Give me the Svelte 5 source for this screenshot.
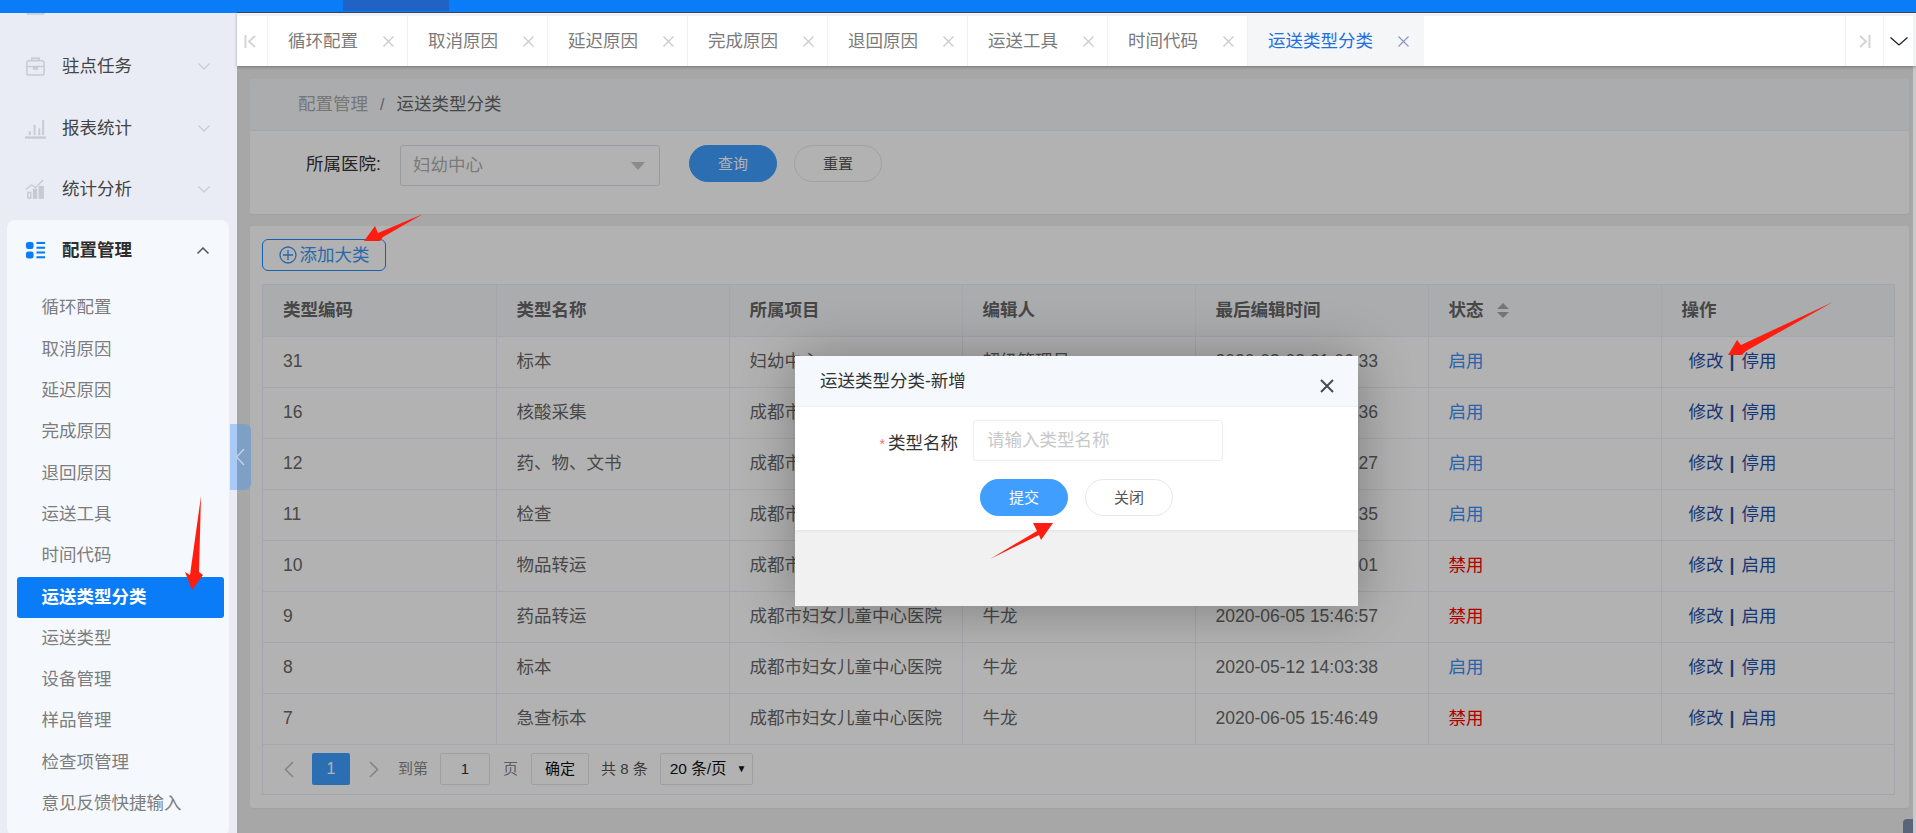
<script>
  const groups = [
    { name: '意见反馈', icon: 'top' },
    { name: '驻点任务', icon: 'case' },
    { name: '报表统计', icon: 'bars' },
    { name: '统计分析', icon: 'trend' }
  ];
  const subs = ['循环配置','取消原因','延迟原因','完成原因','退回原因','运送工具','时间代码','运送类型分类','运送类型','设备管理','样品管理','检查项管理','意见反馈快捷输入'];
  const tabs = ['循环配置','取消原因','延迟原因','完成原因','退回原因','运送工具','时间代码','运送类型分类'];
  const heads = ['类型编码','类型名称','所属项目','编辑人','最后编辑时间','状态','操作'];
  const H = '成都市妇女儿童中心医院';
  const rows = [
    ['31','标本','妇幼中心','超级管理员','2020-08-08 21:06:33',true],
    ['16','核酸采集',H,'牛龙','2020-06-05 15:47:36',true],
    ['12','药、物、文书',H,'牛龙','2020-06-05 15:47:27',true],
    ['11','检查',H,'牛龙','2020-06-05 15:47:35',true],
    ['10','物品转运',H,'牛龙','2020-06-05 15:47:01',false],
    ['9','药品转运',H,'牛龙','2020-06-05 15:46:57',false],
    ['8','标本',H,'牛龙','2020-05-12 14:03:38',true],
    ['7','急查标本',H,'牛龙','2020-06-05 15:46:49',false]
  ];
</script>

<div class="page">
  <header class="topbar"><span class="topactive"></span></header>
  <div class="below">
    <aside class="side">
      <div class="scroll">
        {#each groups as g}
          <div class="group">
            <svg class="gicon" viewBox="0 0 22 22" fill="none" stroke="#c6cad4" stroke-width="1.6">
              {#if g.icon === 'case' || g.icon === 'top'}
                <rect x="2" y="5" width="18" height="15" rx="2"/><path d="M7 5V2.5h8V5M2 11h18"/><path d="M9 11v2.5h4V11" fill="#c6cad4"/>
              {:else if g.icon === 'bars'}
                <path d="M0 20.5h22" stroke-width="2.4"/><path d="M5 18v-4M10 18V7M15 18v-7M19 18V2" stroke-width="2"/>
              {:else}
                <path d="M1 11l6-5 4 3 8-8" stroke-width="1.3"/><rect x="3" y="14" width="3" height="6"/><rect x="9" y="11" width="3" height="9" fill="#c6cad4"/><rect x="15" y="8" width="4" height="12" fill="#c6cad4"/>
              {/if}
            </svg>
            <span class="gname">{g.name}</span>
            <svg class="chev" viewBox="0 0 12 7" fill="none" stroke="#c9cdd6" stroke-width="1.3"><path d="M.5.5L6 6l5.5-5.5"/></svg>
          </div>
        {/each}
        <div class="card">
          <div class="group on">
            <svg class="gicon" viewBox="0 0 22 22" fill="#0a7cf8">
              <rect x="1" y="2" width="8" height="7.5" rx="2.5"/><rect x="1" y="12" width="8" height="7.5" rx="2.5"/>
              <rect x="12" y="2" width="9" height="2.2"/><rect x="12" y="7" width="9" height="2.2"/><rect x="12" y="12" width="9" height="2.2"/><rect x="12" y="17" width="9" height="2.2"/>
            </svg>
            <span class="gname">配置管理</span>
            <svg class="chev" viewBox="0 0 12 7" fill="none" stroke="#555" stroke-width="1.5"><path d="M.5 6.5L6 1l5.5 5.5"/></svg>
          </div>
          <ul class="subs">
            {#each subs as s, i}
              <li class:active={i === 7}>{s}</li>
            {/each}
          </ul>
        </div>
      </div>
    </aside>

    <div class="right">
      <nav class="tabwrap">
        <div class="tabs">
          <button class="nav first" aria-label="first">
            <svg viewBox="0 0 12 13" fill="none" stroke="#d4d4d4" stroke-width="2"><path d="M1.5 0v13M11 1L5 6.5 11 12"/></svg>
          </button>
          {#each tabs as t, i}
            <div class="tab" class:cur={i === 7}>
              <span>{t}</span>
              <svg class="x" viewBox="0 0 11 11" fill="none" stroke-width="1.1"><path d="M.5.5l10 10M10.5.5l-10 10"/></svg>
            </div>
          {/each}
          <span class="fill"></span>
          <button class="nav last" aria-label="last">
            <svg viewBox="0 0 12 13" fill="none" stroke="#d4d4d4" stroke-width="2"><path d="M10.5 0v13M1 1l6 5.5L1 12"/></svg>
          </button>
          <button class="nav more" aria-label="more">
            <svg viewBox="0 0 18 9" fill="none" stroke="#222" stroke-width="1.3"><path d="M.5.5L9 8l8.5-7.5"/></svg>
          </button>
        </div>
      </nav>

      <main class="main">
        <section class="box">
          <div class="crumb"><span class="c1">配置管理</span><span class="sl">/</span><span class="c2">运送类型分类</span></div>
          <div class="filter">
            <span class="flabel">所属医院:</span>
            <div class="select"><span>妇幼中心</span><i class="tri"></i></div>
            <button class="pill primary q">查询</button>
            <button class="pill plain r">重置</button>
          </div>
        </section>

        <section class="box listbox">
          <button class="add">
            <svg viewBox="0 0 18 18" fill="none" stroke="currentColor" stroke-width="1.3"><circle cx="9" cy="9" r="8"/><path d="M9 4v10M4 9h10"/></svg>
            添加大类
          </button>
          <div class="tablewrap">
            <table>
              <thead>
                <tr>
                  {#each heads as h, i}
                    <th>{h}{#if i === 5}<svg class="sort" viewBox="0 0 12 15" fill="#a8a8a8"><path d="M6 0l6 6H0zM6 15l6-6H0z"/></svg>{/if}</th>
                  {/each}
                </tr>
              </thead>
              <tbody>
                {#each rows as r}
                  <tr>
                    <td>{r[0]}</td><td>{r[1]}</td><td>{r[2]}</td><td>{r[3]}</td><td>{r[4]}</td>
                    <td class={r[5] ? 'ok' : 'no'}>{r[5] ? '启用' : '禁用'}</td>
                    <td class="ops"><span>修改</span><b>|</b><span>{r[5] ? '停用' : '启用'}</span></td>
                  </tr>
                {/each}
              </tbody>
            </table>
            <div class="pager">
              <svg class="arr" viewBox="0 0 10 17" fill="none" stroke="#bdbdbd" stroke-width="1.6"><path d="M9 1L1.5 8.5 9 16"/></svg>
              <span class="num">1</span>
              <svg class="arr" viewBox="0 0 10 17" fill="none" stroke="#bdbdbd" stroke-width="1.6"><path d="M1 1l7.5 7.5L1 16"/></svg>
              <span class="pt to">到第</span>
              <span class="pbox pin">1</span>
              <span class="pt pg">页</span>
              <span class="pbox ok2">确定</span>
              <span class="total">共 8 条</span>
              <span class="pbox size">20 条/页<i>▼</i></span>
            </div>
          </div>
        </section>
        <div class="shade"></div>
        <div class="fab"></div>
      </main>
      <div class="bar"></div>
    </div>
  </div>

  <div class="toggle">
    <svg viewBox="0 0 10 18" fill="none" stroke="#c6d3e2" stroke-width="1.3"><path d="M9 1L1.5 9 9 17"/></svg>
  </div>

  <div class="modal">
    <div class="mtitle">运送类型分类-新增
      <svg class="mclose" viewBox="0 0 14 14" fill="none" stroke="#4a4a55" stroke-width="2"><path d="M1 1l12 12M13 1L1 13"/></svg>
    </div>
    <div class="mbody">
      <div class="mrow">
        <label class="mlabel" for="tname"><em>*</em>类型名称</label>
        <input id="tname" class="minput" placeholder="请输入类型名称" />
      </div>
      <div class="mbtns">
        <button class="pill primary">提交</button>
        <button class="pill plain">关闭</button>
      </div>
    </div>
    <div class="mfoot"></div>
  </div>

  <svg class="marks" viewBox="0 0 1916 833" fill="#ff1d10">
    <polygon points="423,214 378,233 375,226 364,241 380,241 383,237"/>
    <polygon points="201,496 199,572 203,575 192,590 185,572 190,575"/>
    <polygon points="1833,302 1741,345 1737,340 1728,355 1742,355 1746,351"/>
    <polygon points="990,559 1037,531 1033,523 1053,523 1041,540 1039,535"/>
  </svg>
</div>

<style>
  :global(body) { margin: 0; }
  :global(html), :global(body) { overflow: hidden; }
  .page { position: relative; width: 1916px; height: 833px; overflow: hidden; display: flex; flex-direction: column; font: 17.5px/1.2 "Liberation Sans", "Noto Sans CJK SC", sans-serif; color: #606266; background: #fff; }
  .topbar { position: relative; z-index: 5; height: 12px; flex: none; background: #0a7cf8; box-shadow: 237px 1px 0 #3d4656; }
  .topbar::after { content: ""; position: absolute; left: 0; top: 12px; width: 237px; height: 1px; background: #0a7cf8; }
  .topactive { position: absolute; left: 343px; top: 0; width: 106px; height: 11px; background: #2063c4; }
  .below { flex: 1; display: flex; min-height: 0; }

  .side { width: 237px; flex: none; background: #e9ecf4; overflow: hidden; position: relative; z-index: 3; }
  .scroll { margin-top: -37px; }
  .group { height: 61.3px; display: flex; align-items: center; padding-left: 25px; padding-right: 27px; box-sizing: border-box; color: #444; }
  .gicon { width: 21px; height: 21px; flex: none; }
  .gname { margin-left: 16px; flex: 1; }
  .chev { width: 12px; height: 7px; flex: none; }
  .card { margin: 0 8px 0 7px; padding-bottom: 12px; background: #f5f9fd; border-radius: 8px; }
  .card .group { padding-left: 18px; padding-right: 20px; }
  .on .gname { font-weight: 700; color: #2d2d2d; }
  .subs { list-style: none; margin: 6px 0 0; padding: 0 5px 0 10px; }
  .subs li { height: 41.3px; line-height: 41.3px; padding-left: 24.5px; color: #7d7d7d; border-radius: 3px; white-space: nowrap; }
  .subs li.active { background: #0a7cf8; color: #fff; font-weight: 700; }

  .right { flex: 1; min-width: 0; display: flex; flex-direction: column; position: relative; }
  .tabwrap { height: 54px; flex: none; padding-top: 4px; box-sizing: border-box; background: #f2f3f5; position: relative; z-index: 3; padding-right: 3px; box-shadow: 0 1px 3px rgba(0,0,0,.3); }
  .tabs { height: 50px; display: flex; background: #fff; }
  .nav { height: 50px; padding: 0; border: 0; background: #fff; display: flex; align-items: center; justify-content: center; flex: none; }
  .nav.first { width: 31px; border-right: 1px solid #f0f0f0; padding-right: 4px; }
  .nav.last { width: 38px; border-left: 1px solid #f0f0f0; }
  .nav.more { width: 30px; border-left: 1px solid #f0f0f0; }
  .nav.first svg, .nav.last svg { width: 12px; height: 13px; }
  .nav.more svg { width: 18px; height: 9px; }
  .tab { display: flex; align-items: center; padding: 0 14.5px 0 20px; gap: 24.5px; border-right: 1px solid #f0f0f0; box-sizing: border-box; width: 140px; color: #7a7a7a; white-space: nowrap; }
  .tab .x { width: 11px; height: 11px; flex: none; stroke: #c9c9c9; }
  .tab.cur { width: 176px; background: #f5f6f8; color: #1f6fe0; border-right: 0; gap: 24.5px; }
  .tab.cur .x { stroke: #8a93c4; }
  .fill { flex: 1; }

  .main { flex: 1; min-height: 0; position: relative; background: #f0f0f0; padding: 13px 4px 0 13px; margin-right: 3px; }
  .bar { position: absolute; right: 0; top: 54px; bottom: 0; width: 3px; background: #c8c8c8; }
  .box { background: #fff; border-radius: 3px; box-shadow: 0 1px 2px rgba(0,0,0,.04); }
  .crumb { height: 52px; box-sizing: border-box; padding-left: 48px; display: flex; align-items: center; background: #f5f7fa; border-bottom: 1px solid #ebeef5; border-radius: 3px 3px 0 0; }
  .c1 { color: #aaa; }
  .sl { color: #888; margin: 0 12px; font-size: 16px; }
  .c2 { color: #666; }
  .filter { height: 83px; box-sizing: border-box; padding: 14px 0 0 56px; display: flex; align-items: flex-start; }
  .flabel { width: 94px; line-height: 38px; flex: none; color: #333; }
  .select { width: 260px; height: 41px; box-sizing: border-box; border: 1px solid #dcdfe6; border-radius: 3px; display: flex; align-items: center; justify-content: space-between; padding: 0 14px 0 12px; color: #b0b0b0; }
  .tri { width: 0; height: 0; border: 7.5px solid transparent; border-top: 8px solid #c8c8c8; border-bottom: 0; }
  .pill { width: 88px; height: 37px; padding: 0; border-radius: 19px; font: inherit; font-size: 15px; box-sizing: border-box; }
  .primary { background: #409eff; border: 1px solid #409eff; color: #fff; }
  .plain { background: #fff; border: 1px solid #e4e7ed; color: #555; }
  .q { margin-left: 29px; }
  .r { margin-left: 17px; }

  .listbox { margin-top: 12px; padding: 13px 14px 13px 12px; }
  .add { width: 124px; height: 32px; box-sizing: border-box; padding: 0; border: 1px solid #1f8dff; border-radius: 6px; background: #fff; color: #3a96f5; font: inherit; display: flex; align-items: center; justify-content: center; gap: 3px; }
  .add svg { width: 18px; height: 18px; }
  .tablewrap { margin-top: 13px; border: 1px solid #ebeef5; border-right-width: 1px; }
  table { width: 100%; table-layout: fixed; border-collapse: collapse; }
  th, td { height: 51px; padding: 0 0 0 20px; box-sizing: border-box; text-align: left; border-bottom: 1px solid #ebeef5; border-right: 1px solid #ebeef5; white-space: nowrap; overflow: hidden; }
  th:last-child, td:last-child { border-right: 0; }
  th { background: #f5f7fa; color: #666; font-weight: 700; }
  td { color: #686868; }
  .sort { width: 12px; height: 15px; margin-left: 13px; vertical-align: -2px; }
  td.ok { color: #3a8ef5; }
  td.no { color: #f00; }
  td.ops { padding-left: 27px; color: #1f4fa5; }
  td.ops b { font-weight: 700; margin: 0 7px 0 6px; font-size: 17.5px; }
  .pager { height: 49px; display: flex; align-items: center; font-size: 15px; color: #888; padding-left: 21px; }
  .arr { width: 10px; height: 17px; flex: none; }
  .num { width: 38px; height: 32px; margin: 0 19px 0 18px; background: #409eff; color: #fff; border-radius: 2px; display: flex; align-items: center; justify-content: center; font-size: 16px; }
  .pt { white-space: nowrap; }
  .to { margin-left: 19px; }
  .pbox { height: 32px; box-sizing: border-box; border: 1px solid #e4e4e4; border-radius: 2px; display: flex; align-items: center; justify-content: center; color: #111; white-space: nowrap; }
  .pin { width: 50px; margin-left: 12px; color: #333; }
  .pg { margin-left: 13px; }
  .ok2 { width: 58px; margin-left: 13px; }
  .total { margin-left: 12px; color: #555; }
  .size { width: 93px; margin-left: 12px; justify-content: flex-start; padding-left: 9px; font-size: 15.5px; }
  .size i { font-style: normal; font-size: 10px; margin-left: 10px; }
  .shade { position: absolute; inset: 0; background: rgba(0,0,0,.3); }
  .fab { position: absolute; right: 0; bottom: 0; width: 10px; height: 14px; background: #5b6579; border-radius: 4px 0 0 0; }

  .toggle { position: absolute; left: 230px; top: 424px; width: 21px; height: 66px; z-index: 6; border-radius: 0 6px 6px 0; background: linear-gradient(90deg, #a8caf5 7px, #7fa0c5 7px); display: flex; align-items: center; justify-content: center; }
  .toggle svg { width: 10px; height: 18px; margin-right: 1px; }

  .modal { position: absolute; left: 795px; top: 356px; width: 563px; height: 250px; z-index: 7; background: #f1f1f1; box-shadow: 1px 1px 50px rgba(0,0,0,.3); display: flex; flex-direction: column; color: #333; }
  .mtitle { position: relative; height: 51px; flex: none; box-sizing: border-box; padding-left: 25px; line-height: 50px; background: #f5f9fd; border-bottom: 1px solid #f0f0f0; }
  .mclose { position: absolute; left: 525px; top: 23px; width: 14px; height: 14px; }
  .mbody { height: 123px; flex: none; box-sizing: border-box; background: #fff; padding-top: 13px; box-shadow: 0 1px 3px rgba(0,0,0,.06); }
  .mrow { display: flex; align-items: flex-start; }
  .mlabel { width: 163px; text-align: right; line-height: 46px; flex: none; color: #333; }
  .mlabel em { color: #f56c6c; font-style: normal; font-size: 14px; margin-right: 3px; }
  .minput { width: 250px; height: 41px; margin-left: 15px; box-sizing: border-box; border: 1px solid #eceff3; border-radius: 3px; padding: 0 13px; font: inherit; outline: 0; }
  .minput::placeholder { color: #c8c8c8; }
  .mbtns { display: flex; gap: 17px; margin: 12px 0 0 185px; }
  .marks { position: absolute; inset: 0; z-index: 8; width: 1916px; height: 833px; pointer-events: none; }
</style>
